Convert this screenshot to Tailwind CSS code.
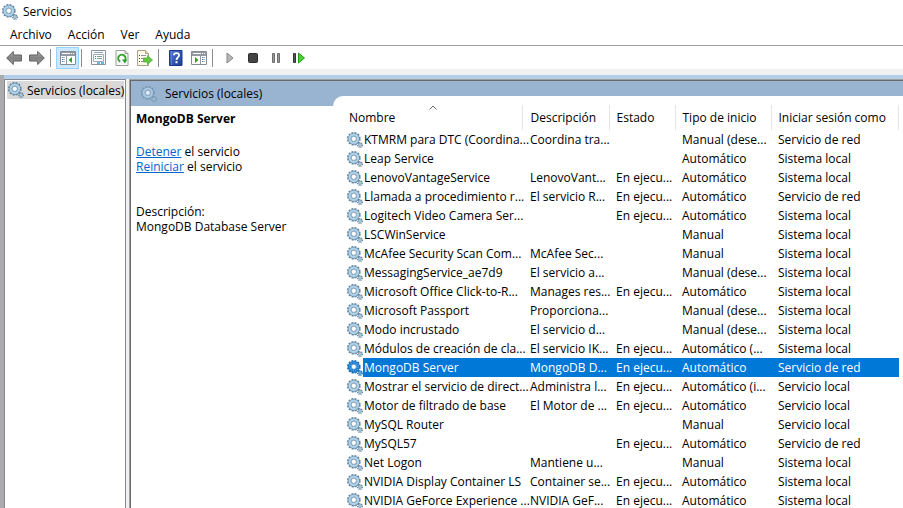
<!DOCTYPE html>
<html lang="es">
<head>
<meta charset="utf-8">
<title>Servicios</title>
<script src="https://cdn.jsdelivr.net/npm/@tailwindcss/browser@4"></script>
</head>
<body class="h-screen overflow-hidden bg-white font-['Open_Sans','Noto_Sans',sans-serif] text-[12px] leading-[15px] text-black">
<svg class="absolute size-0" aria-hidden="true">
  <defs>
  <symbol id="gear" viewBox="0 0 16 16">
    <circle cx="6.800" cy="6.800" r="6" fill="none" stroke="#66859c" stroke-width="1.700" stroke-dasharray="2 1.140"/>
    <circle cx="6.800" cy="6.800" r="4.300" fill="none" stroke="#6a91ae" stroke-width="3.200"/>
    <circle cx="6.800" cy="6.800" r="4.200" fill="none" stroke="#b0d3ea" stroke-width="2.200"/>
    <circle cx="6.800" cy="6.800" r="2.600" fill="#fff" stroke="#6f92ad" stroke-width=".8"/>
    <circle cx="13" cy="13" r="2.300" fill="none" stroke="#66859c" stroke-width="1.400" stroke-dasharray="1.050 .756"/>
    <circle cx="13" cy="13" r="1.400" fill="#d4e6f1" stroke="#7ba1be" stroke-width="1"/>
  </symbol>
  <symbol id="gear-selected" viewBox="0 0 16 16">
    <circle cx="6.800" cy="6.800" r="6" fill="none" stroke="#1c6fb8" stroke-width="1.700" stroke-dasharray="2 1.140"/>
    <circle cx="6.800" cy="6.800" r="4.300" fill="none" stroke="#0f6cc0" stroke-width="3.200"/>
    <circle cx="6.800" cy="6.800" r="4.200" fill="none" stroke="#55a7e6" stroke-width="2.200" stroke-dasharray="1 1"/>
    <circle cx="6.800" cy="6.800" r="2.500" fill="#fff" stroke="#2d84cf" stroke-width=".8"/>
    <circle cx="13" cy="13" r="2.300" fill="none" stroke="#1c6fb8" stroke-width="1.400" stroke-dasharray="1.050 .756"/>
    <circle cx="13" cy="13" r="1.400" fill="#8fc5ee" stroke="#2d84cf" stroke-width="1"/>
  </symbol>
  <linearGradient id="steel" x1="0" y1="0" x2="0" y2="1"><stop offset="0" stop-color="#b4b4b4"/><stop offset=".5" stop-color="#808080"/><stop offset="1" stop-color="#a4a4a4"/></linearGradient>
  <linearGradient id="navy" x1="0" y1="0" x2="1" y2="1"><stop offset="0" stop-color="#5478cd"/><stop offset="1" stop-color="#1b3c9c"/></linearGradient>
  </defs>
</svg>
<div class="flex h-full flex-col">
  <header class="flex h-[23px] shrink-0 items-center gap-1 pl-[2px]">
    <svg class="size-4"><use href="#gear"/></svg>
    <h1 class="pl-px">Servicios</h1>
  </header>
  <nav class="flex h-[22px] shrink-0 items-center gap-4 pl-[10px]">
    <button>Archivo</button><button>Acción</button><button>Ver</button><button>Ayuda</button>
  </nav>
  <div role="toolbar" aria-label="Herramientas" class="flex h-[24px] shrink-0 items-center border-t border-[#a0a0a8] pl-[2px]">
    <button aria-label="Atrás" class="grid h-[22px] w-[23px] place-items-center"><svg class="size-4" viewBox="0 0 16 16"><path d="M.7 8 7.3 1.5V5H15.4v6H7.3v3.5Z" fill="url(#steel)" stroke="#5c5c5c"/></svg></button>
    <button aria-label="Adelante" class="grid h-[22px] w-[23px] place-items-center"><svg class="size-4" viewBox="0 0 16 16"><path d="M15.3 8 8.7 1.5V5H.6v6h8.1v3.5Z" fill="url(#steel)" stroke="#5c5c5c"/></svg></button>
    <span class="mr-[5px] ml-[2px] h-[18px] w-px bg-[#8c8c8c]"></span>
    <button aria-label="Árbol de consola" class="grid h-[22px] w-[23px] place-items-center border border-[#99d1ff] bg-[#cce8ff]"><svg class="h-[14px] w-4" viewBox="0 0 16 14"><path d="M.5.5h15v13H.5Z" fill="#fff" stroke="#858c93"/><path d="M1 1h14v3H1Z" fill="#9299a0"/><path d="M2 2.5h8M11 2.5h1M13 2.5h1" stroke="#fff"/><path d="M1 4.5h14M6.500 5v8" stroke="#9299a0"/><path d="M2 6.500h3M2 8.500h3M2 10.500h3" stroke="#4c7ba8" stroke-dasharray="1 .5"/><path d="M12 6v6L8.500 9Z" fill="#2ca02c"/></svg></button>
    <span class="mr-[5px] ml-[2px] h-[18px] w-px bg-[#8c8c8c]"></span>
    <button aria-label="Propiedades" class="grid h-[22px] w-[23px] place-items-center"><svg class="size-4" viewBox="0 0 16 16"><path d="M.5.500h14v14h-14Z" fill="#f7f9fa" stroke="#8b9298"/><path d="M3 2.500h9" stroke="#9aa6b0"/><path d="M2.500 4.500h10v7h-10Z" fill="#fff" stroke="#a3abb3"/><path d="M4 6.500h1M4 8.500h1" stroke="#2e86c8"/><path d="M6 6.500h5M6 8.500h5" stroke="#8d98a3"/><path d="M6 13h3M10 13h3" stroke="#37a5dd" stroke-width="1.500"/></svg></button>
    <button aria-label="Actualizar" class="grid h-[22px] w-[23px] place-items-center"><svg class="size-4" viewBox="0 0 16 16"><path d="M2 .5h9l3 3v12H2Z" fill="#fbfcfb" stroke="#9a9f9a"/><path d="M11 .5v3h3" fill="#ddd" stroke="#9a9f9a"/><path d="M6.300 11.700A3.700 3.700 0 1 1 11.200 10" fill="none" stroke="#38a52f" stroke-width="1.900"/><path d="M8 9.500h5.200L11 13.500Z" fill="#249a24"/></svg></button>
    <button aria-label="Exportar lista" class="grid h-[22px] w-[23px] place-items-center"><svg class="size-4" viewBox="0 0 16 16"><path d="M.5.5h8l3 3v12H.5Z" fill="#fffbe7" stroke="#a8a28c"/><path d="M8.500.5v3h3" fill="#eee2b5" stroke="#a8a28c"/><path d="M2 5.500h1M2 8.500h1M2 11.500h1" stroke="#444"/><path d="M4 5.500h5M4 8.500h4M4 11.500h5" stroke="#9a8fb0"/><path d="M6.500 8h4V5.500l5 4.500-5 4.500V12h-4Z" fill="#63c744" stroke="#4aa838" stroke-width=".7"/></svg></button>
    <span class="mr-[5px] ml-[2px] h-[18px] w-px bg-[#8c8c8c]"></span>
    <button aria-label="Ayuda" class="grid h-[22px] w-[23px] place-items-center"><svg class="h-4 w-[14px]" viewBox="0 0 14 16"><path d="M.5.5h12.500v15H.5Z" fill="url(#navy)" stroke="#183787"/><path d="M2.500 1v14" stroke="#6888d3" stroke-width=".7"/><path d="M5 5.300C5 2.300 10 2.300 10 5.300 10 7.500 7.500 7.300 7.500 10" fill="none" stroke="#fff" stroke-width="1.800"/><path d="M6.500 11.200h2v2h-2Z" fill="#fff"/></svg></button>
    <button aria-label="Panel de acciones" class="grid h-[22px] w-[23px] place-items-center"><svg class="h-[14px] w-4" viewBox="0 0 16 14"><path d="M.5.5h15v13H.5Z" fill="#fff" stroke="#858c93"/><path d="M1 1h14v3H1Z" fill="#9299a0"/><path d="M2 2.500h8M11 2.500h1M13 2.500h1" stroke="#fff"/><path d="M1 4.500h14M9.500 5v8" stroke="#9299a0"/><path d="M11 6.500h3M11 8.500h3M11 10.500h3" stroke="#4c7ba8" stroke-dasharray="1 .5"/><path d="M4 6v6l3.500-3Z" fill="#2ca02c"/></svg></button>
    <span class="mr-[5px] ml-[2px] h-[18px] w-px bg-[#8c8c8c]"></span>
    <button aria-label="Iniciar" class="grid h-[22px] w-[23px] place-items-center"><svg class="h-3 w-2" viewBox="0 0 8 12"><path d="M1 1v10l6-5Z" fill="#b8b8b8" stroke="#858585"/></svg></button>
    <button aria-label="Detener" class="grid h-[22px] w-[23px] place-items-center"><svg class="size-[10px]" viewBox="0 0 10 10"><rect x=".5" y=".5" width="9" height="9" rx="1" fill="#444" stroke="#2c2c2c"/></svg></button>
    <button aria-label="Pausar" class="grid h-[22px] w-[23px] place-items-center"><svg class="h-[10px] w-2" viewBox="0 0 8 10"><path d="M.5.5h2v9h-2ZM5.500.5h2v9h-2Z" fill="#999" stroke="#707070"/></svg></button>
    <button aria-label="Reiniciar" class="grid h-[22px] w-[23px] place-items-center"><svg class="h-3 w-3" viewBox="0 0 12 12"><path d="M.5 1.500h2v9h-2Z" fill="#555" stroke="#333"/><path d="M5.500 1v10l6-5Z" fill="#4fd02f" stroke="#249a18"/></svg></button>
  </div>
  <div class="h-[6px] shrink-0 bg-[#f0f0f0]"></div>
  <main class="flex min-h-0 flex-1 border-l-4 border-[#ababab] bg-[#b4cde8] pt-1">
    <aside class="w-[122px] shrink-0 border border-b-0 border-[#828790] bg-white pt-px pr-px pl-[2px]">
      <a href="#lista" class="flex h-[18px] items-center gap-[3px] bg-[#d9d9d9] pl-px whitespace-nowrap"><svg class="size-4 shrink-0"><use href="#gear"/></svg>Servicios (locales)</a>
    </aside>
    <div class="w-[3px] shrink-0 bg-[#f0f0f0]"></div>
    <section class="flex min-w-0 flex-1 flex-col border-t border-l border-[#a0a0a0]">
      <div class="flex min-h-0 flex-1 flex-col border-t border-l border-[#696969] bg-[#99b4d1]">
        <div class="flex min-h-0 flex-1">
          <div class="flex w-[202px] shrink-0 flex-col">
            <h2 class="flex h-[25px] shrink-0 items-center gap-2 pl-[10px]"><svg class="size-4 opacity-70"><use href="#gear"/></svg>Servicios (locales)</h2>
            <div class="flex-1 bg-white pt-[5px] pl-[5px]">
              <h3 class="font-bold">MongoDB Server</h3>
              <p class="pt-[18px]"><a href="#detener" class="text-[#0066cc] underline">Detener</a> el servicio</p>
              <p><a href="#reiniciar" class="text-[#0066cc] underline">Reiniciar</a> el servicio</p>
              <p class="pt-[30px]">Descripción:</p>
              <p>MongoDB Database Server</p>
            </div>
          </div>
          <div class="mt-[15px] min-w-0 flex-1 overflow-hidden rounded-tl-[10px] bg-white pt-[9px] pr-1 pl-[10px]">
            <table id="lista" class="w-full table-fixed border-collapse text-left whitespace-nowrap">
              <colgroup><col class="w-[179px]"><col class="w-[87px]"><col class="w-[66px]"><col class="w-[96px]"><col></colgroup>
              <thead>
                <tr class="h-[25px]">
                  <th class="relative border-r border-[#e5e5e5] p-0 pl-[6px] font-normal">Nombre<svg class="absolute top-0 left-[86px] h-[5px] w-2" viewBox="0 0 8 5"><path d="M.5 4.500 4 1l3.500 3.500" fill="none" stroke="#666"/></svg></th>
                  <th class="border-r border-[#e5e5e5] p-0 pl-2 font-normal">Descripción</th>
                  <th class="border-r border-[#e5e5e5] p-0 pl-[7px] font-normal">Estado</th>
                  <th class="border-r border-[#e5e5e5] p-0 pl-[7px] font-normal">Tipo de inicio</th>
                  <th class="border-r border-[#e5e5e5] p-0 pl-[7px] font-normal">Iniciar sesión como</th>
                </tr>
              </thead>
              <tbody id="rows"></tbody>
            </table>
          </div>
        </div>
      </div>
    </section>
  </main>
</div>
<script>
const E = "En ejecu...", A = "Automático", M = "Manual", D = "Manual (dese...", L = "Sistema local", R = "Servicio de red", S = "Servicio local";
const services = [
  ["KTMRM para DTC (Coordina...", "Coordina tra...", "", D, R],
  ["Leap Service", "", "", A, L],
  ["LenovoVantageService", "LenovoVant...", E, A, L],
  ["Llamada a procedimiento r...", "El servicio R...", E, A, R],
  ["Logitech Video Camera Ser...", "", E, A, L],
  ["LSCWinService", "", "", M, L],
  ["McAfee Security Scan Com...", "McAfee Sec...", "", M, L],
  ["MessagingService_ae7d9", "El servicio a...", "", D, L],
  ["Microsoft Office Click-to-R...", "Manages res...", E, A, L],
  ["Microsoft Passport", "Proporciona...", "", D, L],
  ["Modo incrustado", "El servicio d...", "", D, L],
  ["Módulos de creación de cla...", "El servicio IK...", E, "Automático (...", L],
  ["MongoDB Server", "MongoDB D...", E, A, R],
  ["Mostrar el servicio de direct...", "Administra l...", E, "Automático (i...", S],
  ["Motor de filtrado de base", "El Motor de ...", E, A, S],
  ["MySQL Router", "", "", M, S],
  ["MySQL57", "", E, A, R],
  ["Net Logon", "Mantiene u...", "", M, L],
  ["NVIDIA Display Container LS", "Container se...", E, A, L],
  ["NVIDIA GeForce Experience ...", "NVIDIA GeF...", E, A, L]
];
document.getElementById("rows").innerHTML = services.map(([name, ...rest]) => {
  const on = name === "MongoDB Server";
  return `<tr class="h-[19px]${on ? " text-white" : ""}">
    <td class="p-0"><div class="flex h-[19px] items-center pl-1"><svg class="size-4 shrink-0"><use href="${on ? "#gear-selected" : "#gear"}"/></svg><span class="flex h-[19px] flex-1 items-center pl-px${on ? " bg-[#0078d7]" : ""}">${name}</span></div></td>
    ${rest.map((v, i) => `<td class="p-0 ${i === 0 ? "pl-2" : "pl-[7px]"}${on ? " bg-[#0078d7]" : ""}">${v}</td>`).join("")}
  </tr>`;
}).join("");
</script>
</body>
</html>
